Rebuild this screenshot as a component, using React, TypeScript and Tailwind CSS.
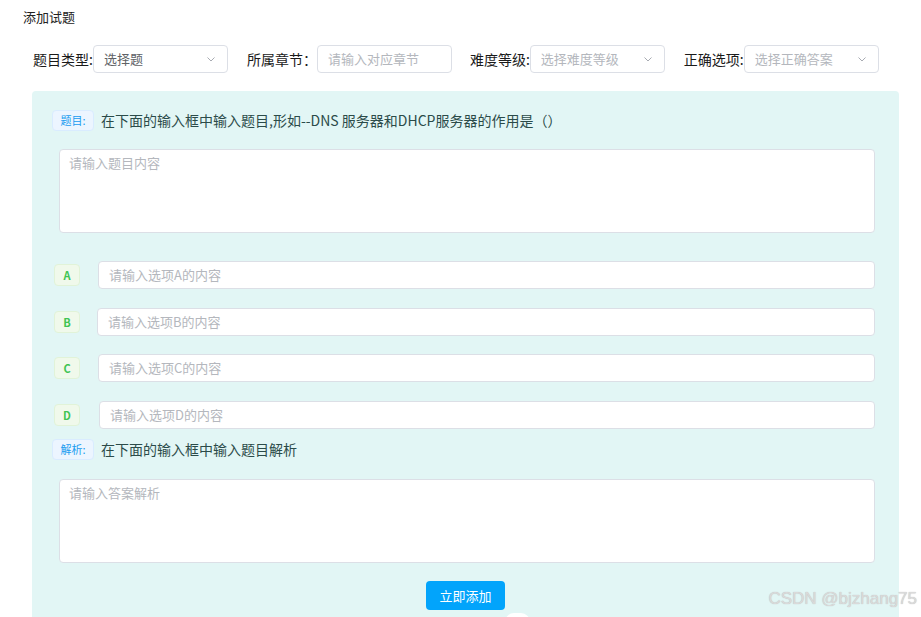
import React from 'react';

const font = { fontFamily: '"Noto Sans CJK SC", "Microsoft YaHei", sans-serif' };

const Chevron: React.FC = () => (
  <svg width="12" height="12" viewBox="0 0 12 12" className="text-[#a8abb2]">
    <path d="M2.5 4.5 L6 8 L9.5 4.5" fill="none" stroke="currentColor" strokeWidth="1" />
  </svg>
);

const SelectBox: React.FC<{ text: string; dark?: boolean }> = ({ text, dark }) => (
  <div className="flex h-[28px] w-[135px] items-center justify-between rounded-[4px] border border-[#dcdfe6] bg-white pl-[10px] pr-[10px]">
    <span className={`text-[13px] ${dark ? 'text-[#606266]' : 'text-[#b4b7bd]'}`}>{text}</span>
    <Chevron />
  </div>
);

const Tag: React.FC<{ text: string }> = ({ text }) => (
  <span className="flex h-[21px] w-[42px] items-center justify-center rounded-[4px] border border-[#d9ecff] bg-[#ecf5ff] text-[11px] text-[#1a9cf0]">
    {text}
  </span>
);

const OptionRow: React.FC<{ letter: string; ml: string; mt: string }> = ({ letter, ml, mt }) => (
  <div className={`flex items-center ${mt}`}>
    <span className="ml-[2px] flex h-[22px] w-[26px] items-center justify-center rounded-[4px] border border-[#e1f3d8] bg-[#f0f9eb] text-[11px] font-semibold text-[#3fc454]">
      {letter}
    </span>
    <div className={`flex h-[28px] flex-1 items-center rounded-[4px] border border-[#dcdfe6] bg-white px-[10px] ${ml}`}>
      <span className="text-[13px] text-[#b4b7bd]">请输入选项{letter}的内容</span>
    </div>
  </div>
);

const TextArea: React.FC<{ placeholder: string }> = ({ placeholder }) => (
  <div className="ml-[7px] h-[84px] rounded-[4px] border border-[#dcdfe6] bg-white px-[9px] pt-[4px]">
    <span className="block text-[13px] leading-[18px] text-[#b4b7bd]">{placeholder}</span>
  </div>
);

export default function App() {
  return (
    <div className="relative h-[617px] w-[921px] overflow-hidden bg-white" style={font}>
      <div className="pl-[23px] pt-[7px] text-[13px] leading-[20px] text-[#222]">添加试题</div>

      <div className="mt-[18px] flex items-center pl-[33px] text-[14px] text-[#1a1a1a]">
        <span>题目类型:</span>
        <SelectBox text="选择题" dark />
        <span className="ml-[19px]">所属章节：</span>
        <div className="flex h-[28px] w-[135px] items-center rounded-[4px] border border-[#dcdfe6] bg-white px-[10px]">
          <span className="text-[13px] text-[#b4b7bd]">请输入对应章节</span>
        </div>
        <span className="ml-[18px]">难度等级:</span>
        <SelectBox text="选择难度等级" />
        <span className="ml-[19px]">正确选项:</span>
        <SelectBox text="选择正确答案" />
      </div>

      <div className="ml-[32px] mt-[18px] w-[867px] rounded-t-[4px] bg-[#e2f6f5] pb-[20px] pl-[20px] pr-[24px] pt-[19px]">
        <div className="flex h-[21px] items-center">
          <Tag text="题目:" />
          <span className="ml-[7px] text-[14px] leading-[21px] text-[#2b4b49]">
            在下面的输入框中输入题目,形如--DNS 服务器和DHCP服务器的作用是（）
          </span>
        </div>

        <div className="mt-[18px]">
          <TextArea placeholder="请输入题目内容" />
        </div>

        <div className="mt-[28px] flex flex-col">
          <OptionRow letter="A" ml="ml-[18px]" mt="mt-0" />
          <OptionRow letter="B" ml="ml-[17px]" mt="mt-[19px]" />
          <OptionRow letter="C" ml="ml-[18px]" mt="mt-[18px]" />
          <OptionRow letter="D" ml="ml-[19px]" mt="mt-[19px]" />
        </div>

        <div className="mt-[10px] flex h-[21px] items-center">
          <Tag text="解析:" />
          <span className="ml-[7px] text-[14px] leading-[21px] text-[#2b4b49]">在下面的输入框中输入题目解析</span>
        </div>

        <div className="mt-[19px]">
          <TextArea placeholder="请输入答案解析" />
        </div>

        <div className="mt-[18px] flex justify-center">
          <button className="ml-[4px] h-[29px] w-[79px] rounded-[4px] bg-[#02a4fb] text-[13px] text-white">
            立即添加
          </button>
        </div>
      </div>

      <div className="absolute bottom-[-14px] left-[505px] h-[18px] w-[25px] rounded-full bg-white" />
      <div
        className="absolute bottom-[6px] right-[4px] text-[17px] text-[#dadada]"
        style={{ fontFamily: '"Liberation Sans", Arial, sans-serif', textShadow: '0 0 1px #b5b5b5' }}
      >
        CSDN @bjzhang75
      </div>
    </div>
  );
}
